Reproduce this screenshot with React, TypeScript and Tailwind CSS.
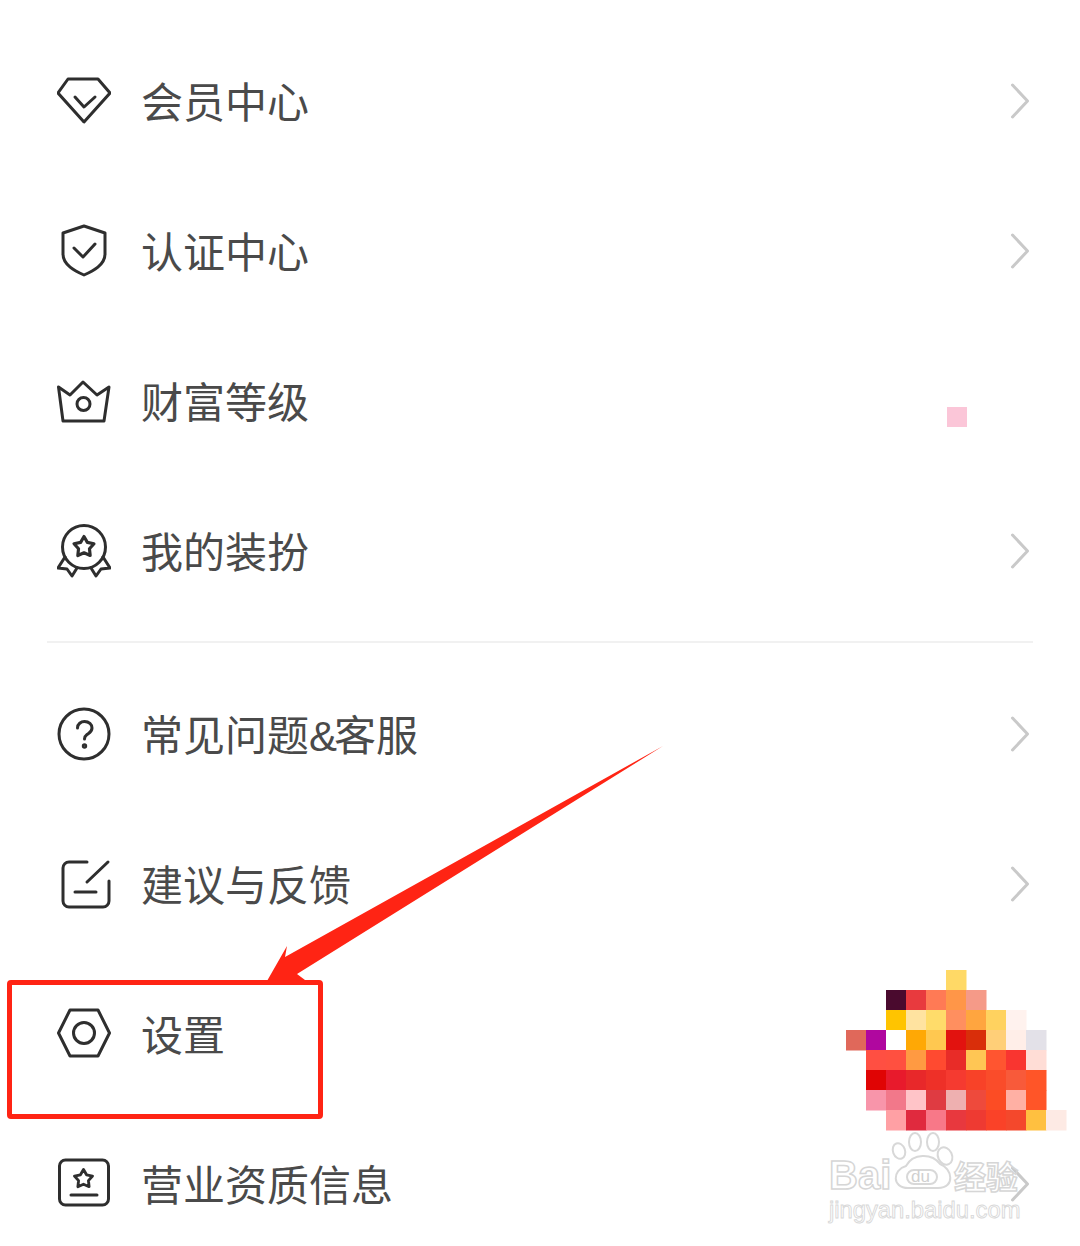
import React from 'react';

const STAR = '0,-10 3.2,-4.4 9.5,-3.1 5.2,1.7 5.9,8.1 0,5.5 -5.9,8.1 -5.2,1.7 -9.5,-3.1 -3.2,-4.4';

const Icon: React.FC<{ children: React.ReactNode }> = ({ children }) => (
  <svg
    viewBox="0 0 54 54"
    fill="none"
    stroke="#2e2e2e"
    strokeWidth="3"
    strokeLinecap="round"
    strokeLinejoin="round"
    className="w-[54px] h-[54px] shrink-0"
  >
    {children}
  </svg>
);

const Chevron: React.FC = () => (
  <svg viewBox="0 0 20 36" fill="none" stroke="#c9c9c9" strokeWidth="3" strokeLinecap="round" strokeLinejoin="round" className="w-5 h-9 shrink-0">
    <path d="M2.5 2 L17.5 18 L2.5 34" />
  </svg>
);

const diamond = (
  <Icon>
    <path d="M11 5H41L53 19L27 48L1 19Z" />
    <path d="M18 23L27 33L38 23" />
  </Icon>
);
const shield = (
  <Icon>
    <path d="M27 2L48 9V30C48 41 36 47 27 51C18 47 6 41 6 30V9Z" />
    <path d="M17 24L26 33L38 20" />
  </Icon>
);
const crown = (
  <Icon>
    <path d="M1.5 13L13 21L26 8L40 21L52 13L47 47H6Z" />
    <circle cx="26.5" cy="30" r="6.5" />
  </Icon>
);
const medal = (
  <Icon>
    <circle cx="27" cy="23" r="21.5" />
    <polygon points={STAR} transform="translate(27 23) scale(1.05)" />
    <path d="M8 33L1 44L10 45L15 52L20 44" />
    <path d="M46 33L53 44L44 45L39 52L34 44" />
  </Icon>
);
const question = (
  <Icon>
    <circle cx="27" cy="27" r="25" />
    <path d="M20.5 21C20.5 17 24 14.5 27.5 14.5C32 14.5 35 17.5 35 21C35 25 32 26 30 27.5C28 29 27.5 30 27.5 32" />
    <circle cx="27.5" cy="39" r="1.2" />
  </Icon>
);
const edit = (
  <Icon>
    <path d="M30 5H12A6 6 0 0 0 6 11V44A6 6 0 0 0 12 50H46A6 6 0 0 0 52 44V24" />
    <path d="M51 5L30 25" />
    <path d="M18 35H39" />
  </Icon>
);
const hexagon = (
  <Icon>
    <path d="M1.5 26L13 3H41L52.5 26L41 49H13Z" />
    <circle cx="27" cy="26" r="10.5" />
  </Icon>
);
const licence = (
  <Icon>
    <rect x="2.5" y="3" width="49" height="45" rx="6" />
    <polygon points={STAR} transform="translate(26.5 22) scale(0.95)" />
    <path d="M14 38H40" />
  </Icon>
);

const topRows = [
  { icon: diamond, label: '会员中心', arrow: true },
  { icon: shield, label: '认证中心', arrow: true },
  { icon: crown, label: '财富等级', arrow: false },
  { icon: medal, label: '我的装扮', arrow: true },
];

const bottomRows = [
  {
    icon: question,
    label: (
      <>
        常见问题<span className="tracking-[-3px]">&amp;</span>客服
      </>
    ),
    arrow: true,
  },
  { icon: edit, label: '建议与反馈', arrow: true },
  { icon: hexagon, label: '设置', arrow: false },
  { icon: licence, label: '营业资质信息', arrow: true },
];

// mosaic cells: column start x, one row every 20px from y=970
const MOSAIC: [number, string[]][] = [
  [946, ['#ffd966']],
  [886, ['#4a0a2e', '#e83a3e', '#ff7a55', '#ff9648', '#f59a88']],
  [886, ['#ffc400', '#ffe3a0', '#ffdc6a', '#ff8f5f', '#ffa53f', '#ffd25f', '#fff2ee']],
  [846, ['#e0685a', '#b0079f', '#ffffff', '#ffa805', '#ffc850', '#e2120f', '#d92e0a', '#ffcf78', '#ffeee8', '#e3e1e8']],
  [866, ['#ff4f42', '#ff5040', '#ff9a42', '#ff4a30', '#e82c28', '#ffc654', '#ff5530', '#f93530', '#ffddd6']],
  [866, ['#e00404', '#e81a2c', '#e8282a', '#ee3028', '#f53a30', '#f84228', '#fa4c2a', '#f85a3a', '#ff5528']],
  [866, ['#f895aa', '#f2788a', '#ffc4c8', '#df3b42', '#eeb0b0', '#ee4a3c', '#fc4c24', '#ffb0a4', '#ff5528']],
  [886, ['#ffa0a4', '#e02a3e', '#f87888', '#e8383e', '#ee3a32', '#fa4228', '#f4482c', '#ffc040', '#fdeae4']],
];

const Row: React.FC<{ icon: React.ReactNode; label: React.ReactNode; arrow: boolean }> = ({ icon, label, arrow }) => (
  <div className="h-[150px] flex items-center pl-[57px] pr-[50px]">
    {icon}
    <span className="ml-[30px] pt-[5px] flex-1 text-[42px] leading-none text-[#4a4a4a] font-['Liberation_Sans','Noto_Sans_CJK_SC',sans-serif]">{label}</span>
    {arrow && <Chevron />}
  </div>
);

export default function App() {
  return (
    <div className="relative w-[1080px] h-[1246px] overflow-hidden bg-white">
      <div className="pt-[26px]">
        {topRows.map((r, i) => (
          <Row key={i} {...r} />
        ))}
      </div>
      <div className="mx-[47px] mt-[15px] mb-4 h-0.5 bg-[#f1f1f1]" />
      <div>
        {bottomRows.map((r, i) => (
          <Row key={i} {...r} />
        ))}
      </div>

      {/* annotation + pixelated sticker lying over the screenshot */}
      <div className="absolute left-[947px] top-[407px] w-5 h-5 bg-[#fbc6d8]" />
      <div className="absolute left-[7px] top-[980px] w-[316px] h-[139px] border-[5px] border-[#ff2414] rounded-[4px]" />
      <svg className="absolute left-0 top-0 w-[1080px] h-[1246px] pointer-events-none" viewBox="0 0 1080 1246">
        <polygon points="663,746 297,974 305,980 267,981 287,946 285,957" fill="#ff2414" />
        {MOSAIC.map(([x, colors], row) =>
          colors.map((c, i) => <rect key={row + '-' + i} x={x + i * 20} y={970 + row * 20} width="20.5" height="20.5" fill={c} />),
        )}
        {/* baidu paw */}
        <g fill="none" stroke="#d8d8d8" strokeWidth="2">
          <ellipse cx="899" cy="1151" rx="6" ry="8" transform="rotate(-20 899 1151)" />
          <ellipse cx="915" cy="1142" rx="6" ry="9" />
          <ellipse cx="933" cy="1142" rx="6" ry="9" />
          <ellipse cx="945" cy="1156" rx="7" ry="9" transform="rotate(-25 945 1156)" />
          <path d="M906 1166C913 1153 932 1153 940 1164C952 1168 956 1188 938 1188H908C892 1188 892 1170 906 1166Z" />
          <rect x="907" y="1170" width="30" height="14" rx="7" />
        </g>
      </svg>

      {/* watermark */}
      <div className="absolute left-[829px] top-[1151px] w-[200px] h-[42px] text-transparent [-webkit-text-stroke:1.5px_#d6d6d6] font-['Liberation_Sans',sans-serif]">
        <span className="absolute left-0 top-0 text-[40px] leading-[48px] font-bold">Bai</span>
        <span className="absolute left-[125px] top-[4px] text-[32px] leading-[40px] font-bold font-['Noto_Sans_CJK_SC',sans-serif]">经验</span>
      </div>
      <div className="absolute left-[911px] top-[1168px] text-[17px] leading-[18px] text-[#d0d0d0] font-['Liberation_Sans',sans-serif]">du</div>
      <div className="absolute left-[829px] top-[1197px] text-[23.75px] leading-[26px] text-transparent [-webkit-text-stroke:0.9px_#d8d8d8] font-['Liberation_Sans',sans-serif]">
        jingyan.baidu.com
      </div>
    </div>
  );
}
